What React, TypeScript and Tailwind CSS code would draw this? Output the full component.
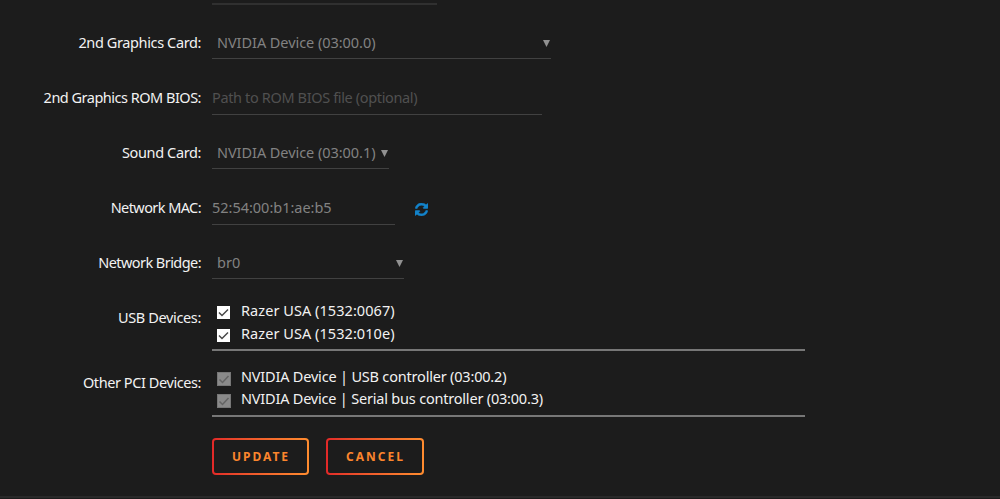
import React from "react";

const Row: React.FC<{
  label: string;
  className: string;
  labelClass?: string;
  children: React.ReactNode;
}> = ({ label, className, labelClass = "", children }) => (
  <div className={`flex items-start ${className}`}>
    <div className="w-[201px] mr-[11px] flex justify-end leading-[18px] text-[#f2f2f2]">
      <span className={`whitespace-nowrap ${labelClass}`}>{label}</span>
    </div>
    {children}
  </div>
);

const Arrow = () => (
  <svg className="w-[7px] h-[8px] mt-[7px] mr-[1px]" viewBox="0 0 7 8">
    <path d="M0 0H7L3.5 7Z" fill="#919191" />
  </svg>
);

const Select: React.FC<{ className: string; textClass?: string; value: string }> = ({
  className,
  textClass = "",
  value,
}) => (
  <div className={`flex justify-between h-[26px] pl-[5px] border-b border-[#414141] text-[#828282] leading-[18px] ${className}`}>
    <span className={`whitespace-nowrap ${textClass}`}>{value}</span>
    <Arrow />
  </div>
);

const Device: React.FC<{ name: string; disabled?: boolean; textClass?: string }> = ({
  name,
  disabled,
  textClass = "",
}) => (
  <div className={`flex pl-[5px] leading-[18px] text-[#f2f2f2] ${disabled ? "h-[22px]" : "h-[22.5px]"}`}>
    {disabled ? (
      <svg className="w-[14px] h-[14px] mt-[5px] mr-[10px]" viewBox="0 0 14 14">
        <rect x="0.5" y="0.5" width="13" height="13" fill="#8a8a8a" stroke="#777777" />
        <path d="M2.5 7.5L5.5 10.5L11.5 4" fill="none" stroke="#646464" strokeWidth="1.5" />
      </svg>
    ) : (
      <svg className="w-[13px] h-[13px] mt-[5px] mr-[11px]" viewBox="0 0 13 13">
        <rect width="13" height="13" fill="#ffffff" />
        <path d="M2 6.5L5 9.5L11 3.5" fill="none" stroke="#484848" strokeWidth="1.5" />
      </svg>
    )}
    <span className={`whitespace-nowrap ${textClass}`}>{name}</span>
  </div>
);

const ActionButton: React.FC<{ label: string; className: string }> = ({ label, className }) => (
  <button className={`h-[36.5px] px-[2px] py-[1.5px] rounded-[4px] bg-linear-to-r from-[#e22828] to-[#ff8c2f] ${className}`}>
    <span className="flex h-full items-center justify-center rounded-[2px] bg-[#1c1c1c] pl-[1px] pt-[1px] text-[12px] font-bold tracking-[2px] text-[#fb852d]">
      {label}
    </span>
  </button>
);

const App: React.FC = () => {
  return (
    <div className="flex h-[499px] w-[1000px] flex-col overflow-hidden bg-[#1c1c1c] font-['Noto_Sans',sans-serif] text-[14.5px]">
      <div className="ml-[212px] h-[5px] w-[225px] shrink-0 border-b-2 border-[#303030]" />
      <Row label="2nd Graphics Card:" className="mt-[28px] h-[26px]" labelClass="tracking-[-0.38px]">
        <Select className="w-[339px]" textClass="tracking-[-0.05px]" value="NVIDIA Device (03:00.0)" />
      </Row>
      <Row label="2nd Graphics ROM BIOS:" className="mt-[29px] h-[27px]" labelClass="tracking-[-0.5px]">
        <input
          className="h-[27px] w-[330px] border-b border-[#414141] bg-transparent pb-[8px] leading-[18px] tracking-[-0.36px] placeholder:text-[#505050]"
          placeholder="Path to ROM BIOS file (optional)"
        />
      </Row>
      <Row label="Sound Card:" className="mt-[28px] h-[26px]" labelClass="tracking-[-0.38px]">
        <Select className="w-[177px]" textClass="tracking-[-0.05px]" value="NVIDIA Device (03:00.1)" />
      </Row>
      <Row label="Network MAC:" className="mt-[29px] h-[27px]" labelClass="tracking-[-0.58px]">
        <input
          className="h-[27px] w-[183px] border-b border-[#414141] bg-transparent pb-[8px] leading-[18px] tracking-[-0.02px] text-[#828282]"
          defaultValue="52:54:00:b1:ae:b5"
        />
        <svg className="ml-[20px] mt-[5px] h-[13px] w-[13px]" viewBox="0 0 1536 1536" fill="#1383ca" stroke="#1383ca" strokeWidth="60">
          <path d="M1511 928q0 5-1 7-64 268-268 434.500T764 1536q-146 0-282.500-55T238 1324l-129 129q-19 19-45 19t-45-19-19-45V960q0-26 19-45t45-19h448q26 0 45 19t19 45-19 45l-137 137q71 66 161 102t187 36q134 0 250-65t186-179q11-17 53-117 8-23 30-23h192q13 0 22.500 9.500t9.500 22.500zm25-800v448q0 26-19 45t-45 19h-448q-26 0-45-19t-19-45 19-45l138-138Q969 256 768 256q-134 0-250 65T332 500q-11 17-53 117-8 23-30 23H50q-13 0-22.500-9.500T18 608v-7q65-268 270-434.500T768 0q146 0 284 55.500T1297 212l130-129q19-19 45-19t45 19 19 45z" />
        </svg>
      </Row>
      <Row label="Network Bridge:" className="mt-[28px] h-[26px]" labelClass="tracking-[-0.56px]">
        <Select className="w-[192px]" value="br0" />
      </Row>
      <Row label="USB Devices:" className="mt-[29px] h-[43px]" labelClass="tracking-[-0.35px]">
        <div className="-mt-[7px] h-[50px] w-[593px] border-b-2 border-[#777777]">
          <Device name="Razer USA (1532:0067)" textClass="tracking-[0.06px]" />
          <Device name="Razer USA (1532:010e)" textClass="tracking-[0.06px]" />
        </div>
      </Row>
      <Row label="Other PCI Devices:" className="mt-[22px] h-[44px]" labelClass="tracking-[-0.42px]">
        <div className="-mt-[6px] h-[50px] w-[593px] border-b-2 border-[#777777]">
          <Device name="NVIDIA Device | USB controller (03:00.2)" textClass="tracking-[-0.19px]" disabled />
          <Device name="NVIDIA Device | Serial bus controller (03:00.3)" textClass="tracking-[-0.2px]" disabled />
        </div>
      </Row>
      <div className="ml-[212px] mt-[21px] flex gap-[17px]">
        <ActionButton label="UPDATE" className="w-[97px]" />
        <ActionButton label="CANCEL" className="w-[98px]" />
      </div>
      <div className="mt-auto h-[3px] border-b border-[#1c1c1c] bg-[#292929]" />
    </div>
  );
};

export default App;
